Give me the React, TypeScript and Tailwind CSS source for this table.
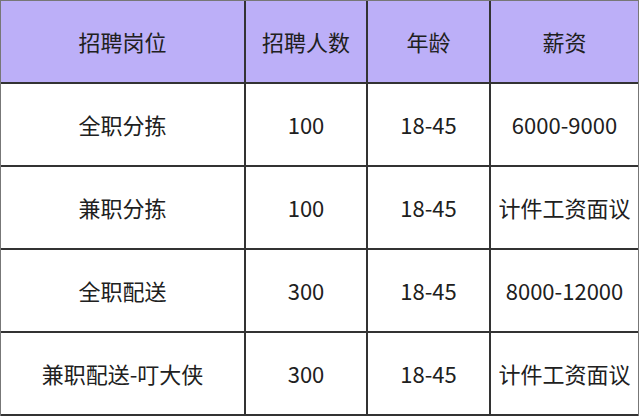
const rows: string[][] = [
  ["全职分拣", "100", "18-45", "6000-9000"],
  ["兼职分拣", "100", "18-45", "计件工资面议"],
  ["全职配送", "300", "18-45", "8000-12000"],
  ["兼职配送-叮大侠", "300", "18-45", "计件工资面议"],
];

const head = ["招聘岗位", "招聘人数", "年龄", "薪资"];

function Cell({ text, last, header }: { text: string; last: boolean; header?: boolean }) {
  return (
    <div
      className={`flex items-center justify-center h-[83px] border-b-2 border-[#333] ${
        last ? "" : "border-r-2"
      } ${header ? "bg-[#bcaff8]" : "bg-white"}`}
    >
      {text}
    </div>
  );
}

export default function App() {
  return (
    <div
      className="w-[640px] h-[417px] bg-white text-[22px] text-[#202020]"
      style={{ fontFamily: '"Noto Sans CJK SC", "Noto Sans", sans-serif' }}
    >
      <div className="grid grid-cols-[245px_122px_123px_1fr] border-l border-r border-t border-[#777] w-[639px]">
        {head.map((h, i) => (
          <Cell key={h} text={h} last={i === 3} header />
        ))}
        {rows.map((r, ri) =>
          r.map((c, ci) => <Cell key={ri + "-" + ci} text={c} last={ci === 3} />)
        )}
      </div>
    </div>
  );
}
